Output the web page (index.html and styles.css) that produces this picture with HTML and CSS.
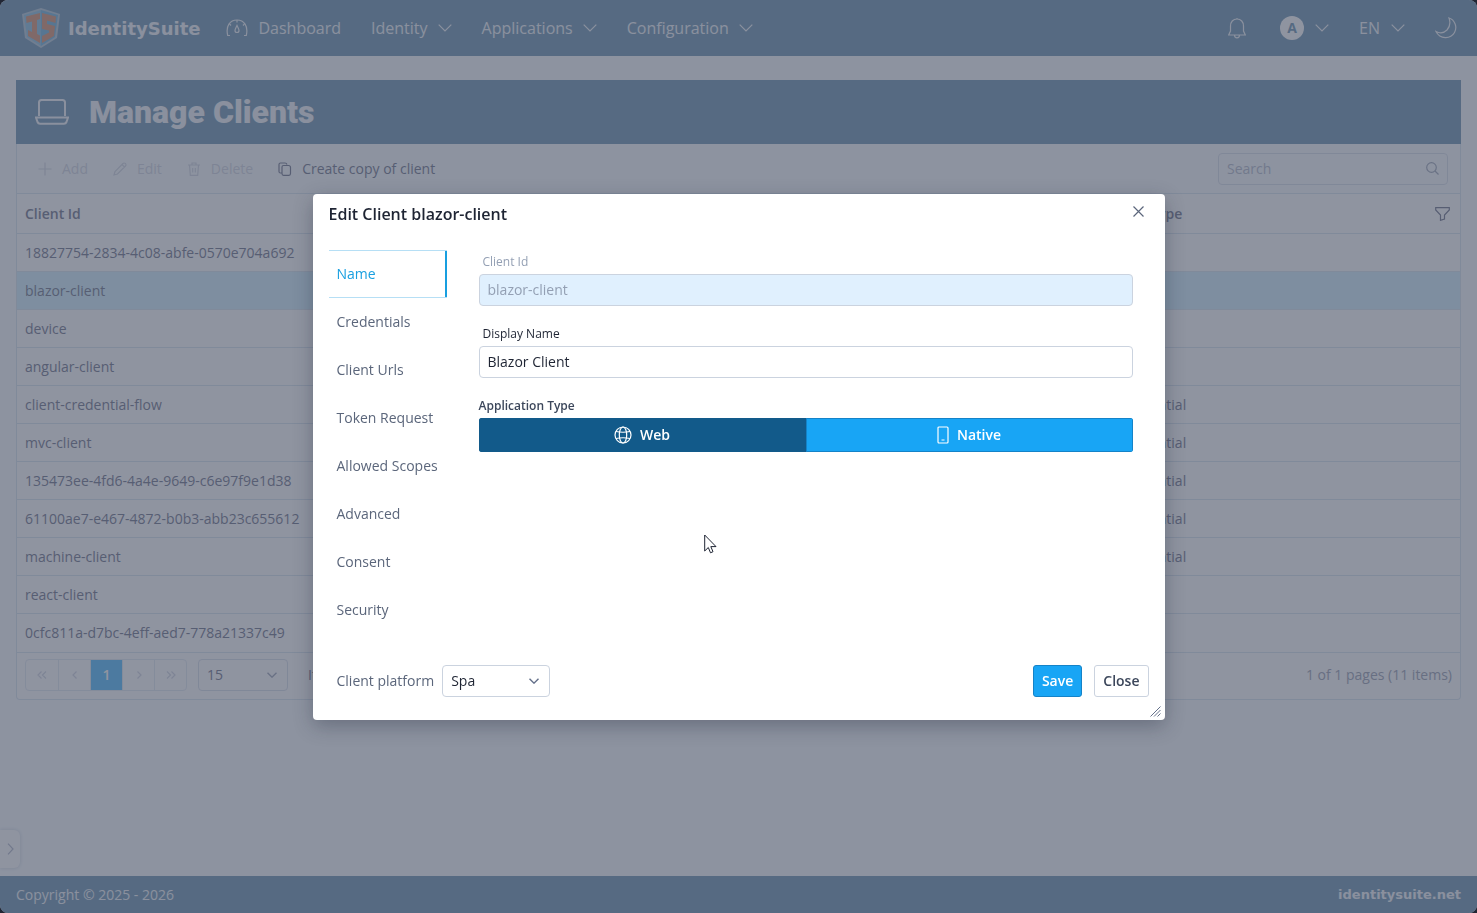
FILE: index.html
```html
<!DOCTYPE html>
<html lang="en">

<head>
    <meta charset="UTF-8">
    <meta name="viewport" content="width=device-width, initial-scale=1.0">
    <title>Manage Clients - IdentitySuite</title>
    <link rel="stylesheet" href="styles.css">
</head>

<body>
    <!-- Shared icons -->
    <svg class="sprite" aria-hidden="true">
        <symbol id="chevron" viewBox="0 0 14 8">
            <path d="M.7.7 7 7 13.3.7" />
        </symbol>
    </svg>

    <div class="app">
        <header class="topbar">
            <a class="brand" href="#">
                <svg class="brand-logo" viewBox="0 0 38 40" aria-hidden="true">
                    <path d="M19 0 38 6 35 30 19 40 3 30 0 6Z" fill="#c3d2de" />
                    <path d="M19 2 36 7 33 29 19 38Z" fill="#8fc2e2" />
                    <path d="M19 2 2 7 5 29 19 38Z" fill="#a3cde6" />
                    <path d="M4 8.500 18 5V11L15 12V26L18 27.500V35L6 28V22L10 24V13.500L4.500 15Z" fill="#e0a88e" />
                    <path d="M20 5 34 8.500 33.500 15 25 12.500V16L33 18 32 28 20 35V28L27 24.500V22.500L20 21Z" fill="#e0a88e" />
                </svg>
                <span>IdentitySuite</span>
            </a>
            <nav class="menu">
                <a href="#">
                    <svg class="icon" width="22" height="18" viewBox="0 0 22 18" aria-hidden="true">
                        <path d="M4 16.500H1.700C-.5 7 4 1 11 1S22.500 7 20.300 16.500H18" />
                        <path d="M11 1V3.500M3.500 5 5 6.500M18.500 5 17 6.500" />
                        <path d="M11 6.500C10 9 9 10 9 11.500A2 2 0 0 0 13 11.500C13 10 12 9 11 6.500Z" />
                    </svg>
                    Dashboard
                </a>
                <a href="#">Identity <svg class="icon chev"><use href="#chevron" /></svg></a>
                <a href="#">Applications <svg class="icon chev"><use href="#chevron" /></svg></a>
                <a href="#">Configuration <svg class="icon chev"><use href="#chevron" /></svg></a>
            </nav>
            <div class="account">
                <button type="button" class="bell" aria-label="Notifications">
                    <svg class="icon" width="18" height="22" viewBox="0 0 18 22" aria-hidden="true">
                        <path d="M9 1V2M9 2C5 2 2.500 5 2.500 9V14L.7 18H17.300L15.500 14V9C15.500 5 13 2 9 2ZM6.500 18C6.500 21.700 11.500 21.700 11.500 18" />
                    </svg>
                </button>
                <button type="button" aria-label="Account">
                    <span class="avatar">A</span>
                    <svg class="icon chev"><use href="#chevron" /></svg>
                </button>
                <button type="button" class="lang">EN <svg class="icon chev"><use href="#chevron" /></svg></button>
                <button type="button" aria-label="Dark mode">
                    <svg class="icon" width="22" height="22" viewBox="0 0 22 22" aria-hidden="true">
                        <path d="M14 1C20 3 22.500 10 19.500 15.500C15.500 22.500 5 22.500 1 14.500C5 16.500 9 16 12 13C15 9.500 15.500 5 14 1Z" />
                    </svg>
                </button>
            </div>
        </header>

        <main class="content">
            <div class="page-title">
                <svg class="icon" width="34" height="26" viewBox="0 0 34 26" aria-hidden="true">
                    <path d="M4 17V3.500Q4 1 6.500 1H27.500Q30 1 30 3.500V17M1 18.500H33L31.500 23Q30.800 24.700 29 24.700H5Q3.200 24.700 2.500 23Z" />
                </svg>
                <h1>Manage Clients</h1>
            </div>

            <div class="grid">
                <div class="toolbar">
                    <button type="button" disabled>
                        <svg class="icon" width="14" height="14" viewBox="0 0 14 14"><path d="M7 .5V13.500M.5 7H13.500" /></svg>
                        Add
                    </button>
                    <button type="button" disabled>
                        <svg class="icon" width="14" height="14" viewBox="0 0 14 14"><path d="M1 13 2 9.500 10 1.500Q11 .5 12.500 1.500 13.500 3 12.500 4L4.500 12ZM9 2.500 11.500 5" /></svg>
                        Edit
                    </button>
                    <button type="button" disabled>
                        <svg class="icon" width="14" height="14" viewBox="0 0 14 14"><path d="M1 3H13M5 3V1H9V3M2.500 3 3.300 13.300H10.700L11.500 3M5.700 6V10.500M8.300 6V10.500" /></svg>
                        Delete
                    </button>
                    <button type="button">
                        <svg class="icon" width="14" height="14" viewBox="0 0 14 14"><path d="M3.500 11H2.500Q1 11 1 9.500V2.500Q1 1 2.500 1H7Q8.500 1 9 2.500M5.500 3.500H10.500Q12.500 3.500 12.500 5.500V11.500Q12.500 13.300 11 13.300H5.500Q4 13.300 4 11.500V5Q4 3.500 5.500 3.500Z" /></svg>
                        Create copy of client
                    </button>
                    <div class="search">
                        <input type="search" placeholder="Search" aria-label="Search">
                        <svg class="icon" width="13" height="13" viewBox="0 0 13 13" aria-hidden="true"><circle cx="5.500" cy="5.500" r="4.800" /><path d="M9 9 12.500 12.500" /></svg>
                    </div>
                </div>

                <table>
                    <thead>
                        <tr>
                            <th>Client Id</th>
                            <th></th>
                            <th></th>
                            <th>
                                <div class="th-filter">
                                    Client Type
                                    <svg class="icon" width="15" height="14" viewBox="0 0 15 14" aria-hidden="true"><path d="M.7.7H14.300V3L9.500 8V12L5.500 13.300V8L.7 3Z" /></svg>
                                </div>
                            </th>
                        </tr>
                    </thead>
                    <tbody>
                        <tr><td>18827754-2834-4c08-abfe-0570e704a692</td><td></td><td></td><td>Public</td></tr>
                        <tr class="selected"><td>blazor-client</td><td></td><td></td><td>Public</td></tr>
                        <tr><td>device</td><td></td><td></td><td>Public</td></tr>
                        <tr><td>angular-client</td><td></td><td></td><td>Public</td></tr>
                        <tr><td>client-credential-flow</td><td></td><td></td><td>Confidential</td></tr>
                        <tr><td>mvc-client</td><td></td><td></td><td>Confidential</td></tr>
                        <tr><td>135473ee-4fd6-4a4e-9649-c6e97f9e1d38</td><td></td><td></td><td>Confidential</td></tr>
                        <tr><td>61100ae7-e467-4872-b0b3-abb23c655612</td><td></td><td></td><td>Confidential</td></tr>
                        <tr><td>machine-client</td><td></td><td></td><td>Confidential</td></tr>
                        <tr><td>react-client</td><td></td><td></td><td>Public</td></tr>
                        <tr><td>0cfc811a-d7bc-4eff-aed7-778a21337c49</td><td></td><td></td><td>Public</td></tr>
                    </tbody>
                </table>

                <div class="pager">
                    <div class="pages">
                        <button type="button" disabled aria-label="First page"><svg class="icon" width="10" height="8" viewBox="0 0 10 8"><path d="M4.500.5 1 4 4.500 7.500M9 .5 5.500 4 9 7.500" /></svg></button>
                        <button type="button" disabled aria-label="Previous page"><svg class="icon" width="6" height="8" viewBox="0 0 6 8"><path d="M4.500.5 1 4 4.500 7.500" /></svg></button>
                        <button type="button" class="current">1</button>
                        <button type="button" disabled aria-label="Next page"><svg class="icon" width="6" height="8" viewBox="0 0 6 8"><path d="M1.500.5 5 4 1.500 7.500" /></svg></button>
                        <button type="button" disabled aria-label="Last page"><svg class="icon" width="10" height="8" viewBox="0 0 10 8"><path d="M1 .5 4.500 4 1 7.500M5.500.5 9 4 5.500 7.500" /></svg></button>
                    </div>
                    <div class="combo combo-size">
                        <select id="page-size">
                            <option>15</option>
                            <option>30</option>
                        </select>
                        <svg class="icon chev-small" aria-hidden="true"><use href="#chevron" /></svg>
                    </div>
                    <label for="page-size">Items per page</label>
                    <span class="summary">1 of 1 pages (11 items)</span>
                </div>
            </div>
        </main>

        <button type="button" class="drawer-toggle" aria-label="Open panel">
            <svg class="icon" width="7" height="12" viewBox="0 0 7 12"><path d="M1 .7 6 6 1 11.300" /></svg>
        </button>

        <footer class="footer">
            <span>Copyright © 2025 - 2026</span>
            <a href="#">identitysuite.net</a>
        </footer>
    </div>

    <div class="backdrop">
        <div class="dialog" role="dialog" aria-modal="true" aria-labelledby="dialog-title">
            <div class="dialog-head">
                <h2 id="dialog-title">Edit Client blazor-client</h2>
                <button type="button" aria-label="Close dialog">
                    <svg class="icon" width="11" height="11" viewBox="0 0 11 11"><path d="M.5.5 10.500 10.500M10.500.5.5 10.500" /></svg>
                </button>
            </div>

            <div class="dialog-body">
                <div class="tabs" role="tablist">
                    <button type="button" role="tab" class="active" aria-selected="true">Name</button>
                    <button type="button" role="tab">Credentials</button>
                    <button type="button" role="tab">Client Urls</button>
                    <button type="button" role="tab">Token Request</button>
                    <button type="button" role="tab">Allowed Scopes</button>
                    <button type="button" role="tab">Advanced</button>
                    <button type="button" role="tab">Consent</button>
                    <button type="button" role="tab">Security</button>
                </div>

                <div class="panel" role="tabpanel">
                    <div class="field is-disabled">
                        <label for="client-id">Client Id</label>
                        <input type="text" id="client-id" value="blazor-client" disabled>
                    </div>
                    <div class="field">
                        <label for="display-name">Display Name</label>
                        <input type="text" id="display-name" value="Blazor Client">
                    </div>
                    <div class="field">
                        <span class="group-label" id="type-label">Application Type</span>
                        <div class="switch" role="group" aria-labelledby="type-label">
                            <button type="button" class="on" aria-pressed="true">
                                <svg class="icon" width="18" height="18" viewBox="0 0 18 18"><circle cx="9" cy="9" r="8" /><ellipse cx="9" cy="9" rx="3.700" ry="8" /><path d="M2 5.500Q9 7 16 5.500M2 12.500Q9 11 16 12.500" /></svg>
                                Web
                            </button>
                            <button type="button" aria-pressed="false">
                                <svg class="icon" width="12" height="18" viewBox="0 0 12 18"><rect x="1" y="1" width="10" height="16" rx="1" /><path d="M4.500 14H7.500" /></svg>
                                Native
                            </button>
                        </div>
                    </div>
                </div>
            </div>

            <div class="dialog-foot">
                <label for="platform">Client platform</label>
                <div class="combo combo-platform">
                    <select id="platform">
                        <option>Spa</option>
                        <option>Web</option>
                    </select>
                    <svg class="icon chev-small" aria-hidden="true"><use href="#chevron" /></svg>
                </div>
                <div class="actions">
                    <button type="button" class="btn btn-primary">Save</button>
                    <button type="button" class="btn">Close</button>
                </div>
            </div>

            <svg class="grip" viewBox="0 0 11 11" aria-hidden="true"><path d="M.5 10.500 10.500.5M4 10.500 10.500 4M7.500 10.500 10.500 7.500" /></svg>
            <svg class="pointer" viewBox="0 0 13 20" aria-hidden="true"><path d="M.7 1V17L4.300 13.500 6.500 18.800 9 17.700 6.800 12.600H12Z" /></svg>
        </div>
    </div>
</body>

</html>
```

FILE: styles.css
```css
* {
    margin: 0;
    padding: 0;
    box-sizing: border-box;
}

html {
    background-color: #222226;
}

body {
    font-family: "Open Sans", "Noto Sans", sans-serif;
    font-size: 14px;
    line-height: 20px;
    color: #8f93a5;
}

button,
input,
select {
    font: inherit;
    color: inherit;
}

button {
    display: flex;
    align-items: center;
    background: none;
    border: none;
    cursor: pointer;
}

a {
    color: inherit;
    text-decoration: none;
}

.sprite {
    display: none;
}

.icon {
    flex: none;
    fill: none;
    stroke: currentColor;
    stroke-width: 1.2;
}

.chev {
    width: 14px;
    height: 8px;
}

.chev-small {
    width: 10px;
    height: 6px;
    stroke-width: 2;
}

.app {
    display: flex;
    flex-direction: column;
    min-height: 100vh;
    background-color: #fbfdff;
    border-radius: 8px;
    overflow: hidden;
}

/* Top bar */
.topbar {
    display: flex;
    align-items: center;
    height: 56px;
    padding: 0 20px 0 22px;
    background-color: #8dabc3;
    color: #f4f7fa;
    font-size: 16px;
}

.brand {
    display: flex;
    align-items: center;
    gap: 8px;
    margin-right: 26px;
    font: bold 18px "DejaVu Sans", sans-serif;
}

.brand-logo {
    width: 38px;
    height: 40px;
}

.menu {
    display: flex;
    gap: 30px;
}

.menu a {
    display: flex;
    align-items: center;
    gap: 10px;
}

.account {
    display: flex;
    align-items: center;
    gap: 30px;
    margin-left: auto;
}

.account button {
    gap: 11px;
}

.bell {
    margin-right: 4px;
}

.lang {
    font-weight: 500;
}

.avatar {
    width: 24px;
    height: 24px;
    border-radius: 50%;
    background-color: #ffffff;
    color: #8dabc3;
    font-size: 14px;
    font-weight: bold;
    line-height: 24px;
    text-align: center;
}

/* Page */
.content {
    flex: 1;
    padding: 24px 16px;
}

.page-title {
    display: flex;
    align-items: center;
    gap: 20px;
    height: 64px;
    padding: 0 19px;
    background-color: #8dabc3;
    color: #f4f7fa;
}

.page-title .icon {
    stroke-width: 2;
}

h1 {
    font: 900 32px Roboto, sans-serif;
}

.grid {
    border: 1px solid #e1eaf3;
    border-top: none;
    border-radius: 0 0 4px 4px;
    background-color: #fffeff;
}

.toolbar {
    display: flex;
    align-items: center;
    gap: 25px;
    height: 49px;
    padding: 0 12px 0 21px;
    background-color: #fbfdff;
}

.toolbar button {
    gap: 10px;
    color: #8f93a5;
}

.toolbar button:disabled {
    color: #dcdfe8;
}

.search {
    display: flex;
    align-items: center;
    width: 230px;
    height: 32px;
    margin-left: auto;
    padding: 0 8px;
    border: 1px solid #e1e6ee;
    border-radius: 4px;
    color: #b4bac8;
}

.search input {
    flex: 1;
    min-width: 0;
    border: none;
    background: none;
    outline: none;
}

.search input::placeholder {
    color: #c4c9d6;
}

table {
    width: 100%;
    table-layout: fixed;
    border-collapse: collapse;
}

th,
td {
    height: 38px;
    padding: 0 8px;
    border-top: 1px solid #e1eaf3;
    text-align: left;
    white-space: nowrap;
}

th {
    height: 40px;
    font-weight: 600;
}

.th-filter {
    display: flex;
    align-items: center;
    justify-content: space-between;
    padding-right: 2px;
}

.selected {
    background-color: #dcf3ff;
}

.pager {
    display: flex;
    align-items: center;
    height: 47px;
    padding: 0 8px 2px;
    border-top: 1px solid #e1eaf3;
}

.pages {
    display: flex;
    height: 32px;
    border: 1px solid #e9eef5;
    border-radius: 4px;
}

.pages button {
    justify-content: center;
    width: 32px;
    color: #dcdfe8;
}

.pages button + button {
    border-left: 1px solid #e9eef5;
}

.pages .current {
    background-color: #78caff;
    color: #ffffff;
    font-weight: 600;
}

/* Drop-down with its arrow laid over the right end */
.combo {
    position: relative;
}

.combo select {
    appearance: none;
    width: 100%;
    height: 32px;
    padding: 0 8px;
    border: 1px solid #cbd3df;
    border-radius: 4px;
    background: none;
}

.combo .icon {
    position: absolute;
    top: 13px;
    right: 11px;
    color: #64708a;
    pointer-events: none;
}

.combo-size {
    width: 90px;
    margin: 0 20px 0 11px;
}

.combo-size select {
    border-color: #e1e6ee;
}

.combo-size .icon {
    color: #b4bac8;
}

.summary {
    margin-left: auto;
    color: #b0b5c3;
}

.drawer-toggle {
    position: fixed;
    left: 0;
    bottom: 45px;
    width: 20px;
    height: 38px;
    padding-left: 7px;
    border-radius: 0 6px 6px 0;
    background-color: #fffeff;
    box-shadow: 0 0 4px #d5dce6;
    color: #c4c9d6;
}

.footer {
    display: flex;
    align-items: center;
    justify-content: space-between;
    height: 37px;
    padding: 0 16px;
    background-color: #8dabc3;
    color: #f4f7fa;
}

.footer a {
    font: bold 13px "DejaVu Sans", sans-serif;
}

/* Edit dialog */
.backdrop {
    position: fixed;
    inset: 0;
    display: flex;
    align-items: center;
    justify-content: center;
    background-color: rgba(31, 41, 65, 0.5);
}

.dialog {
    position: relative;
    width: 90%;
    max-width: 852px;
    border-radius: 4px;
    background-color: #ffffff;
    box-shadow: 0 6px 20px rgba(20, 28, 45, 0.3);
    color: #5b667b;
}

.dialog-head {
    display: flex;
    justify-content: space-between;
    height: 56px;
    padding: 8px 21px 0 16px;
}

.dialog-head h2 {
    color: #1e2433;
    font-size: 16px;
    font-weight: 600;
    line-height: 24px;
}

.dialog-head button {
    height: 20px;
    color: #5b667b;
}

.dialog-body {
    display: flex;
    gap: 32px;
    padding: 0 32px 0 16px;
}

.tabs button {
    width: 118px;
    height: 48px;
    padding-left: 8px;
    border-top: 1px solid transparent;
    border-bottom: 1px solid transparent;
    white-space: nowrap;
}

.tabs .active {
    border-color: #b6dff5;
    box-shadow: inset -2px 0 #189fe0;
    color: #189fe0;
}

.panel {
    display: flex;
    flex: 1;
    flex-direction: column;
    gap: 20px;
    min-width: 0;
    padding-top: 4px;
}

.field {
    display: flex;
    flex-direction: column;
    gap: 4px;
}

.field label,
.group-label {
    color: #1e2433;
    font-size: 12px;
    line-height: 16px;
}

.field label {
    padding-left: 4px;
}

.group-label {
    color: #3c475b;
    font-weight: 600;
}

.field input {
    height: 32px;
    padding: 0 8px;
    border: 1px solid #cbd3df;
    border-radius: 4px;
    outline: none;
    background-color: #ffffff;
    color: #1e2433;
}

.field.is-disabled label,
.field.is-disabled input {
    color: #94a0b4;
}

.field.is-disabled input {
    background-color: #e0f0fe;
}

.switch {
    display: flex;
    border-radius: 3px;
    overflow: hidden;
}

.switch button {
    flex: 1;
    justify-content: center;
    gap: 8px;
    height: 34px;
    border: 1px solid #1483c8;
    background-color: #18a5f5;
    color: #ffffff;
    font-weight: 600;
}

.switch .on {
    border-color: #125a8a;
    background-color: #125a8a;
}

.dialog-foot {
    display: flex;
    align-items: center;
    gap: 8px;
    padding: 31px 16px 23px 24px;
}

.combo-platform {
    width: 108px;
    color: #1e2433;
}

.actions {
    display: flex;
    gap: 12px;
    margin-left: auto;
}

.btn {
    height: 32px;
    padding: 0 8px;
    border: 1px solid #cbd3df;
    border-radius: 3px;
    color: #3c475b;
    font-weight: 600;
}

.btn-primary {
    border-color: #1483c8;
    background-color: #18a5f5;
    color: #ffffff;
}

.grip {
    position: absolute;
    right: 4px;
    bottom: 3px;
    width: 11px;
    height: 11px;
    fill: none;
    stroke: #64708a;
}

.pointer {
    position: absolute;
    top: 340px;
    left: 391px;
    width: 13px;
    height: 20px;
    fill: #ffffff;
    stroke: #1e2433;
}
```
